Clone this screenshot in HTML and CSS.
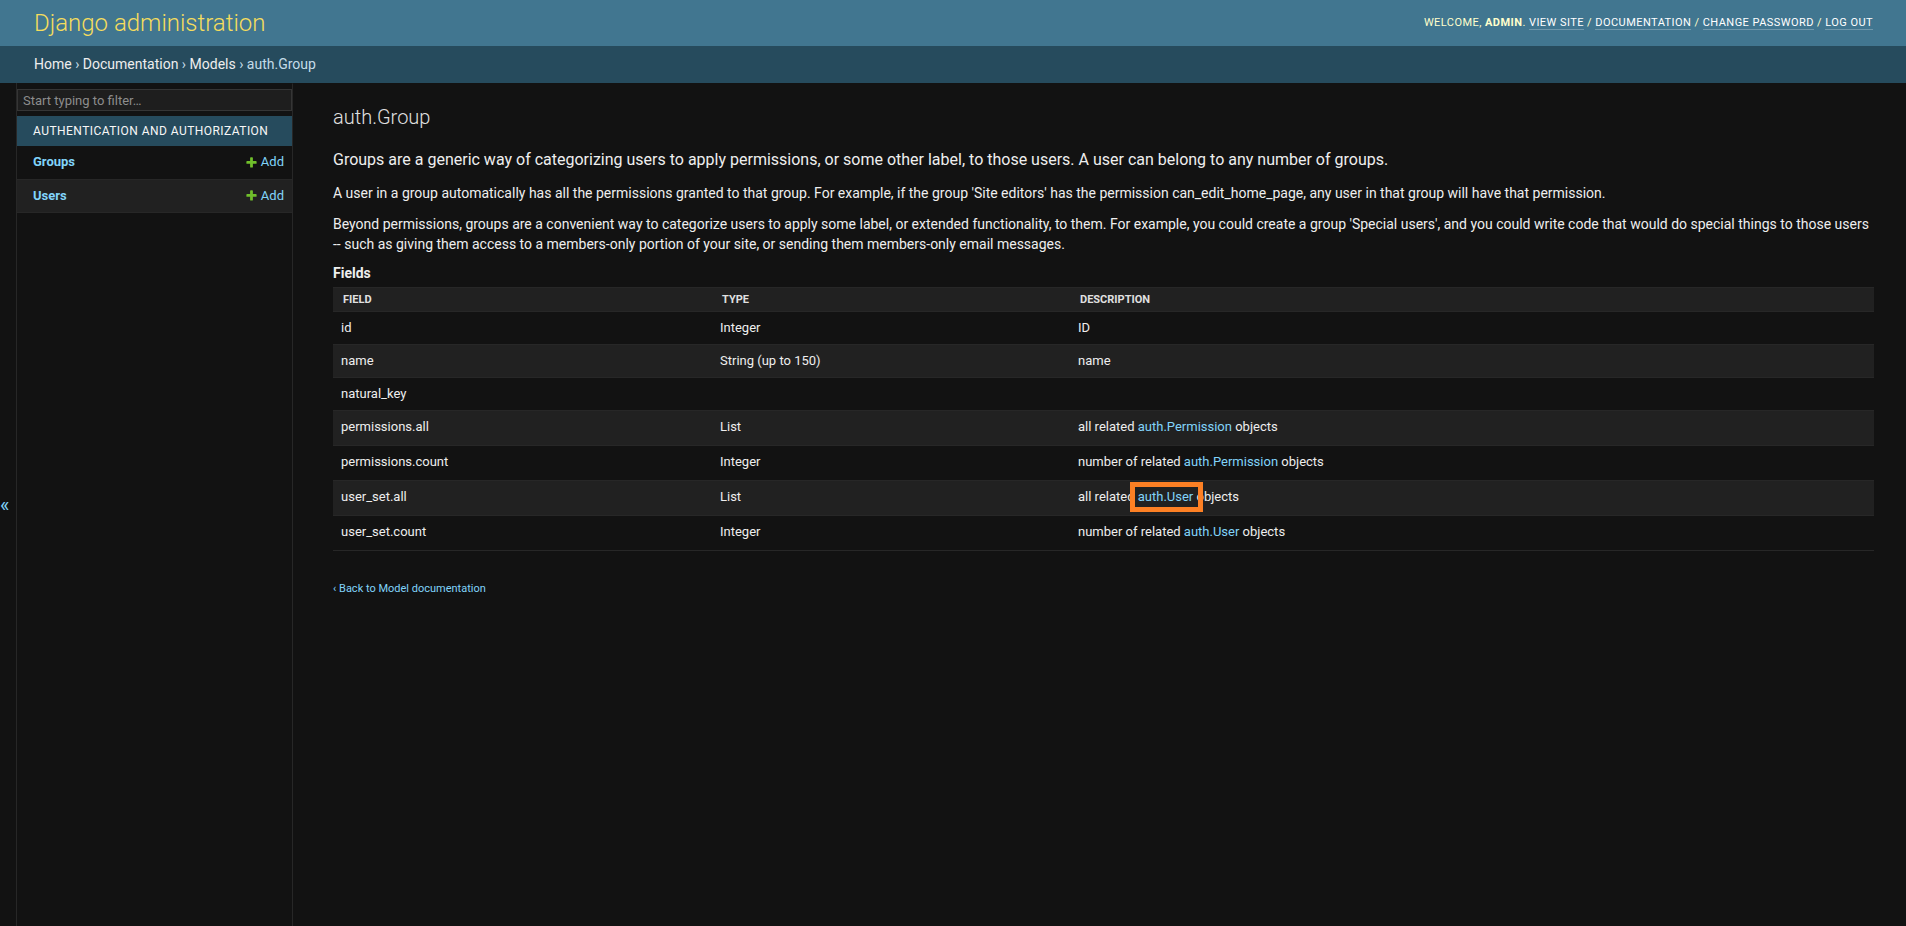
FILE: index.html
```html
<!DOCTYPE html>
<html lang="en">
<head>
<meta charset="utf-8">
<title>auth.Group | Django site admin</title>
<link rel="stylesheet" href="styles.css">
</head>
<body>
<header class="header">
  <h1 class="site-name"><a href="#">Django administration</a></h1>
  <div class="user-tools">Welcome, <strong>admin</strong>. <a href="#">View site</a> / <a href="#">Documentation</a> / <a href="#">Change password</a> / <a href="#">Log out</a></div>
</header>
<nav class="breadcrumbs"><a href="#">Home</a> › <a href="#">Documentation</a> › <a href="#">Models</a> › auth.Group</nav>
<div class="main">
  <button class="toggle-nav" type="button">«</button>
  <nav class="sidebar">
    <input class="nav-filter" type="search" placeholder="Start typing to filter…">
    <table class="app-table">
      <caption>Authentication and Authorization</caption>
      <tbody>
        <tr><th><a href="#">Groups</a></th><td><a class="addlink" href="#"><svg class="plus" width="13" height="13" viewBox="0 0 1792 1792"><path fill="#70bf2b" d="M1600 796v192q0 40-28 68t-68 28h-416v416q0 40-28 68t-68 28h-192q-40 0-68-28t-28-68v-416h-416q-40 0-68-28t-28-68v-192q0-40 28-68t68-28h416v-416q0-40 28-68t68-28h192q40 0 68 28t28 68v416h416q40 0 68 28t28 68z"/></svg>Add</a></td></tr>
        <tr class="row2"><th><a href="#">Users</a></th><td><a class="addlink" href="#"><svg class="plus" width="13" height="13" viewBox="0 0 1792 1792"><path fill="#70bf2b" d="M1600 796v192q0 40-28 68t-68 28h-416v416q0 40-28 68t-68 28h-192q-40 0-68-28t-28-68v-416h-416q-40 0-68-28t-28-68v-192q0-40 28-68t68-28h416v-416q0-40 28-68t68-28h192q40 0 68 28t28 68v416h416q40 0 68 28t28 68z"/></svg>Add</a></td></tr>
      </tbody>
    </table>
  </nav>
  <main class="content">
    <h1 class="title">auth.Group</h1>
    <h2 class="subhead">Groups are a generic way of categorizing users to apply permissions, or some other label, to those users. A user can belong to any number of groups.</h2>
    <p>A user in a group automatically has all the permissions granted to that group. For example, if the group 'Site editors' has the permission can_edit_home_page, any user in that group will have that permission.</p>
    <p>Beyond permissions, groups are a convenient way to categorize users to apply some label, or extended functionality, to them. For example, you could create a group 'Special users', and you could write code that would do special things to those users -- such as giving them access to a members-only portion of your site, or sending them members-only email messages.</p>
    <h3 class="fields-title">Fields</h3>
    <div class="module">
      <table class="model">
        <colgroup><col class="c-field"><col class="c-type"><col></colgroup>
        <thead>
          <tr><th>Field</th><th>Type</th><th>Description</th></tr>
        </thead>
        <tbody>
          <tr><td>id</td><td>Integer</td><td>ID</td></tr>
          <tr><td>name</td><td>String (up to 150)</td><td>name</td></tr>
          <tr><td>natural_key</td><td></td><td></td></tr>
          <tr class="rel"><td>permissions.all</td><td>List</td><td>all related <a href="#">auth.Permission</a> objects</td></tr>
          <tr class="rel"><td>permissions.count</td><td>Integer</td><td>number of related <a href="#">auth.Permission</a> objects</td></tr>
          <tr class="rel"><td>user_set.all</td><td>List</td><td>all related <a class="marked" href="#">auth.User</a> objects</td></tr>
          <tr class="rel"><td>user_set.count</td><td>Integer</td><td>number of related <a href="#">auth.User</a> objects</td></tr>
        </tbody>
      </table>
    </div>
    <p class="small"><a href="#">‹ Back to Model documentation</a></p>
  </main>
</div>
</body>
</html>
```

FILE: styles.css
```css
* {
  box-sizing: border-box;
}

html,
body {
  height: 100%;
}

body {
  margin: 0;
  display: flex;
  flex-direction: column;
  height: 100vh;
  overflow: hidden;
  background: #121212;
  color: #eeeeee;
  font-family: Roboto, "Liberation Sans", sans-serif;
  font-size: 14px;
}

a {
  color: #81d4fa;
  text-decoration: none;
}

/* header */
.header {
  flex: 0 0 46px;
  display: flex;
  align-items: center;
  justify-content: space-between;
  padding: 0 33px 0 34px;
  background: #417690;
  color: #ffffcc;
}

.site-name {
  margin: 0;
  font-size: 24px;
  font-weight: 300;
  line-height: 28px;
}

.site-name a {
  color: #f5dd5d;
}

.user-tools {
  font-size: 11px;
  line-height: 14px;
  letter-spacing: 0.45px;
  text-transform: uppercase;
  color: #ffffcc;
}

.user-tools strong {
  font-weight: 700;
}

.user-tools a {
  color: #ffffff;
  border-bottom: 1px solid rgba(255, 255, 255, 0.25);
}

/* breadcrumbs */
.breadcrumbs {
  flex: 0 0 37px;
  padding: 10px 34px;
  background: #264b5d;
  color: #c4dce8;
  font-size: 14px;
  line-height: 17px;
}

.breadcrumbs a {
  color: #eeeeee;
}

/* main */
.main {
  flex: 1;
  display: flex;
  min-height: 0;
}

.toggle-nav {
  flex: 0 0 17px;
  display: flex;
  align-items: center;
  padding: 0;
  border: 0;
  border-right: 1px solid #272727;
  background: #121212;
  color: #81d4fa;
  font-family: Roboto, "Liberation Sans", sans-serif;
  font-size: 20px;
  line-height: 1;
}

.sidebar {
  flex: 0 0 276px;
  border-top: 1px solid transparent;
  border-right: 1px solid #272727;
}

.nav-filter {
  display: block;
  width: 100%;
  height: 22px;
  margin: 5px 0;
  padding: 2px 5px;
  border: 1px solid #353535;
  border-radius: 0;
  background: #1e1e1e;
  color: #eeeeee;
  font-family: Roboto, "Liberation Sans", sans-serif;
  font-size: 13px;
  outline: none;
}

.nav-filter::placeholder {
  color: #8d8d8d;
}

.app-table {
  width: 100%;
  border-collapse: collapse;
}

.app-table caption {
  padding: 8px 16px;
  background: #264b5d;
  color: #f7f7f7;
  font-size: 12px;
  line-height: 14px;
  letter-spacing: 0.45px;
  text-transform: uppercase;
  text-align: left;
}

.app-table th,
.app-table td {
  height: 33px;
  padding: 8px;
  font-size: 13px;
  line-height: 16px;
  border-bottom: 1px solid #272727;
  vertical-align: top;
}

.app-table th {
  padding-left: 16px;
  text-align: left;
  font-weight: 700;
}

.app-table td {
  text-align: right;
}

.app-table .row2 {
  background: #212121;
}

.addlink {
  display: inline-flex;
  align-items: center;
  height: 16px;
  vertical-align: top;
}

.plus {
  display: block;
  margin-right: 3px;
}

/* content */
.content {
  flex: 1;
  min-width: 0;
  padding: 23px 32px 20px 40px;
}

.title {
  margin: 0 0 20px;
  font-size: 20px;
  font-weight: 300;
  line-height: 23px;
  color: #e0e0e0;
}

.subhead {
  margin: 0 0 12px;
  font-size: 16px;
  font-weight: 400;
  line-height: 22px;
  color: #eeeeee;
}

.content p {
  margin: 0 0 11px;
  line-height: 20px;
}

.fields-title {
  margin: 12px 0 7px;
  font-size: 14px;
  font-weight: 700;
  line-height: 14px;
}

.module {
  margin-bottom: 30px;
}

.model {
  width: 100%;
  table-layout: fixed;
  border-collapse: collapse;
}

.c-field {
  width: 379px;
}

.c-type {
  width: 358px;
}

.model thead th {
  padding: 5px 10px;
  background: #212121;
  border-top: 1px solid #272727;
  border-bottom: 1px solid #272727;
  color: #e0e0e0;
  font-size: 11px;
  font-weight: 700;
  line-height: 13px;
  text-transform: uppercase;
  text-align: left;
}

.model td {
  padding: 8px;
  border-bottom: 1px solid #272727;
  font-size: 13px;
  line-height: 16px;
  vertical-align: top;
}

.model tbody tr:nth-child(even) {
  background: #212121;
}

.model tr.rel td {
  padding-bottom: 10px;
}

.marked {
  position: relative;
}

.marked::after {
  content: "";
  position: absolute;
  left: -8px;
  right: -10px;
  top: -7px;
  bottom: -8px;
  border: 5px solid #fd8024;
}

.content p.small {
  font-size: 11px;
  line-height: 15px;
}
```
